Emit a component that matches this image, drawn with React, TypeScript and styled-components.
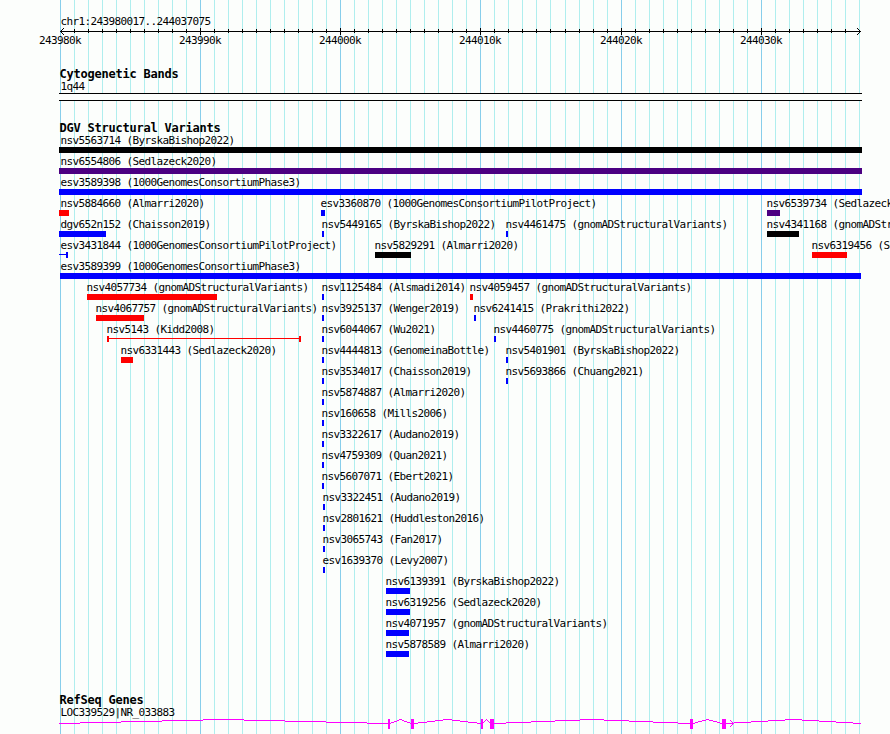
import React from 'react';
import styled, { createGlobalStyle } from 'styled-components';

const GlobalStyle = createGlobalStyle`
  html,
  body {
    margin: 0;
    background-color: #fcfefc;
    overflow: hidden;
  }
`;

const Page = styled.div`
  position: relative;
  width: 890px;
  height: 734px;
  box-sizing: border-box;
  padding: 15px 0 0 59px;
  display: flex;
  flex-direction: column;
  gap: 21px;
  overflow: hidden;
  color: #000;
  background-color: #fcfefc;
`;

const Grid = styled.div`
  position: absolute;
  top: 0;
  left: 60px;
  height: 100%;
  display: grid;
`;

const GridLine = styled.div<{ $major: boolean }>`
  grid-area: 1 / 1;
  width: 1px;
  height: 100%;
  background-color: ${({ $major }) => ($major ? '#87ceeb' : '#afeeee')};
`;

const Section = styled.section<{ $gap?: number }>`
  position: relative;
  width: 803px;
  flex: none;
  margin-top: ${({ $gap = 0 }) => $gap}px;
  > svg {
    display: block;
    overflow: visible;
    shape-rendering: crispEdges;
  }
`;

const Heading = styled.h2`
  margin: 0;
  padding-left: 0.4px;
  font: bold 12px/12px 'DejaVu Sans Mono', monospace;
  letter-spacing: -0.224px;
  white-space: pre;
`;

const Label = styled.div`
  height: 13px;
  margin-left: 1px;
  padding-left: 0.5px;
  font: 11px/13px 'DejaVu Sans Mono', monospace;
  letter-spacing: -0.622px;
  white-space: pre;
`;

const ScaleLabels = styled.div`
  display: grid;
  margin-top: -1px;
  > div {
    grid-area: 1 / 1;
    width: 42px;
    padding-left: 0;
  }
`;

const Band = styled.div`
  height: 6px;
  border: solid #000;
  border-width: 1px 0;
  background-color: #fcfefc;
`;

const Row = styled.div`
  height: 21px;
  display: grid;
  grid-template-columns: 100%;
`;

const Feature = styled.div`
  grid-area: 1 / 1;
  min-width: 0;
`;

const Bar = styled.div<{ $color: string }>`
  height: 6px;
  background-color: ${({ $color }) => $color};
`;

const Whisker = styled.div<{ $color: string; $open?: boolean }>`
  height: 6px;
  box-sizing: border-box;
  display: flex;
  align-items: center;
  border: solid ${({ $color }) => $color};
  border-width: 0 2px 0 ${({ $open }) => ($open ? 0 : 2)}px;
  &::before {
    content: '';
    flex: 1;
    height: 1px;
    margin-bottom: 1px;
    background-color: ${({ $color }) => $color};
  }
`;

const ORIGIN = 59;
const BLUE = '#0000ff';
const RED = '#ff0000';
const BLACK = '#000000';
const INDIGO = '#4b0082';

interface Variant {
  name: string;
  start: number;
  end: number;
  color: string;
  whisker?: boolean;
}

const v = (
  name: string,
  start: number,
  end: number,
  color: string = BLUE,
  whisker = false
): Variant => ({ name, start, end, color, whisker });

const rows: Variant[][] = [
  [v('nsv5563714 (ByrskaBishop2022)', 59, 862, BLACK)],
  [v('nsv6554806 (Sedlazeck2020)', 59, 862, INDIGO)],
  [v('esv3589398 (1000GenomesConsortiumPhase3)', 59, 862)],
  [
    v('nsv5884660 (Almarri2020)', 59, 69, RED),
    v('esv3360870 (1000GenomesConsortiumPilotProject)', 321, 325),
    v('nsv6539734 (Sedlazeck2020)', 767, 780, INDIGO),
  ],
  [
    v('dgv652n152 (Chaisson2019)', 59, 106),
    v('nsv5449165 (ByrskaBishop2022)', 322, 324),
    v('nsv4461475 (gnomADStructuralVariants)', 506, 508),
    v('nsv4341168 (gnomADStructuralVariants)', 767, 799, BLACK),
  ],
  [
    v('esv3431844 (1000GenomesConsortiumPilotProject)', 59, 68, BLUE, true),
    v('nsv5829291 (Almarri2020)', 375, 411, BLACK),
    v('nsv6319456 (Sedlazeck2020)', 812, 847, RED),
  ],
  [v('esv3589399 (1000GenomesConsortiumPhase3)', 60, 861)],
  [
    v('nsv4057734 (gnomADStructuralVariants)', 87, 217, RED),
    v('nsv1125484 (Alsmadi2014)', 322, 324),
    v('nsv4059457 (gnomADStructuralVariants)', 470, 473, RED),
  ],
  [
    v('nsv4067757 (gnomADStructuralVariants)', 96, 144, RED),
    v('nsv3925137 (Wenger2019)', 322, 324),
    v('nsv6241415 (Prakrithi2022)', 474, 476),
  ],
  [
    v('nsv5143 (Kidd2008)', 107, 301, RED, true),
    v('nsv6044067 (Wu2021)', 322, 324),
    v('nsv4460775 (gnomADStructuralVariants)', 494, 496),
  ],
  [
    v('nsv6331443 (Sedlazeck2020)', 121, 133, RED),
    v('nsv4444813 (GenomeinaBottle)', 322, 324),
    v('nsv5401901 (ByrskaBishop2022)', 506, 508),
  ],
  [
    v('nsv3534017 (Chaisson2019)', 322, 324),
    v('nsv5693866 (Chuang2021)', 506, 508),
  ],
  [v('nsv5874887 (Almarri2020)', 322, 324)],
  [v('nsv160658 (Mills2006)', 322, 324)],
  [v('nsv3322617 (Audano2019)', 322, 324)],
  [v('nsv4759309 (Quan2021)', 322, 324)],
  [v('nsv5607071 (Ebert2021)', 322, 324)],
  [v('nsv3322451 (Audano2019)', 323, 325)],
  [v('nsv2801621 (Huddleston2016)', 323, 325)],
  [v('nsv3065743 (Fan2017)', 323, 325)],
  [v('esv1639370 (Levy2007)', 323, 325)],
  [v('nsv6139391 (ByrskaBishop2022)', 386, 410)],
  [v('nsv6319256 (Sedlazeck2020)', 386, 410)],
  [v('nsv4071957 (gnomADStructuralVariants)', 386, 409)],
  [v('nsv5878589 (Almarri2020)', 386, 409)],
];

// one tick per kilobase
const ticks = Array.from({ length: 58 }, (_, i) => ({
  x: Math.round(i * 14.014),
  major: i % 10 === 0,
  label: `${243980 + i}k`,
}));

const exons = [
  [388, 2],
  [411, 3],
  [481, 2],
  [490, 4],
  [690, 3],
  [722, 4],
];

// start, peak and end of every intron
const introns = [
  [59, 223.5, 388],
  [390, 400.5, 411],
  [414, 447.5, 481],
  [483, 486.5, 490],
  [494, 592, 690],
  [693, 707.5, 722],
  [726, 793.5, 861],
];

// pixel-stepped outline of an intron, four pixels high
const intronPath = ([start, peak, end]: number[]): string => {
  let d = '';
  let from = start;
  let level = 0;
  for (let x = start; x <= end; x++) {
    const slope = (peak - Math.abs(x + 0.5 - peak) - start) / (peak - start);
    const next = x === end ? -1 : Math.round(slope * 4);
    if (next !== level) {
      d += `M${from - ORIGIN} ${4 - level}H${x - ORIGIN}v1H${from - ORIGIN}z`;
      from = x;
      level = next;
    }
  }
  return d;
};

const Ruler = () => (
  <svg width="803" height="7">
    <rect x="2" y="3" width="800" height="1" />
    {ticks.slice(1, -1).map(({ x, major }) => (
      <rect
        key={x}
        x={x + 1}
        y={major ? 0 : 1}
        width="1"
        height={major ? 7 : 4}
      />
    ))}
    <path d="M5 0h-1v1h-1v1h-1v1h-1v1h1v1h1v1h1v1h1v-1h-1v-1h-1v-1h-1v-1h1v-1h1v-1h1z" />
    <path d="M798 0h1v1h1v1h1v1h1v1h-1v1h-1v1h-1v1h-1v-1h1v-1h1v-1h1v-1h-1v-1h-1v-1h-1z" />
  </svg>
);

const Gene = () => (
  <svg width="803" height="15" fill="#ff00ff">
    {introns.map((intron) => (
      <path key={intron[0]} d={intronPath(intron)} />
    ))}
    {exons.map(([x, width]) => (
      <rect key={x} x={x - ORIGIN} y="0" width={width} height="10" />
    ))}
    <rect x="667" y="4" width="8" height="1" />
    <path d="M671 1h1v1h1v1h1v1h1v1h-1v1h-1v1h-1v1h-1v-1h1v-1h1v-1h1v-1h-1v-1h-1v-1h-1z" />
  </svg>
);

const VariantFeature: React.FC<{ variant: Variant }> = ({ variant }) => {
  const { name, start, end, color, whisker } = variant;
  const open = start === ORIGIN;
  // labels sit one pixel before the bar unless the bar touches the left edge
  const textX = Math.max(start - 1, 60);

  return (
    <Feature>
      <Label style={{ marginLeft: textX - ORIGIN }}>{name}</Label>
      {whisker === true ? (
        <Whisker
          $color={color}
          $open={open}
          style={{ marginLeft: start - ORIGIN, width: end - start }}
        />
      ) : (
        <Bar
          $color={color}
          style={{ marginLeft: start - ORIGIN, width: end - start }}
        />
      )}
    </Feature>
  );
};

const App: React.FC = () => {
  return (
    <>
      <GlobalStyle />
      <Page>
        <Grid>
          {ticks.map(({ x, major }) => (
            <GridLine key={x} $major={major} style={{ marginLeft: x }} />
          ))}
        </Grid>

        <Section>
          <Label>chr1:243980017..244037075</Label>
          <Ruler />
          <ScaleLabels>
            {ticks
              .filter(({ major }) => major)
              .map(({ x, label }) => (
                <Label key={label} style={{ marginLeft: x - 20 }}>
                  {label}
                </Label>
              ))}
          </ScaleLabels>
        </Section>

        <Section>
          <Heading>Cytogenetic Bands</Heading>
          <Label>1q44</Label>
          <Band />
        </Section>

        <Section>
          <Heading>DGV Structural Variants</Heading>
          {rows.map((row) => (
            <Row key={row[0].name}>
              {row.map((variant) => (
                <VariantFeature key={variant.name} variant={variant} />
              ))}
            </Row>
          ))}
        </Section>

        <Section $gap={14}>
          <Heading>RefSeq Genes</Heading>
          <Label>LOC339529|NR_033883</Label>
          <Gene />
        </Section>
      </Page>
    </>
  );
};

export default App;
